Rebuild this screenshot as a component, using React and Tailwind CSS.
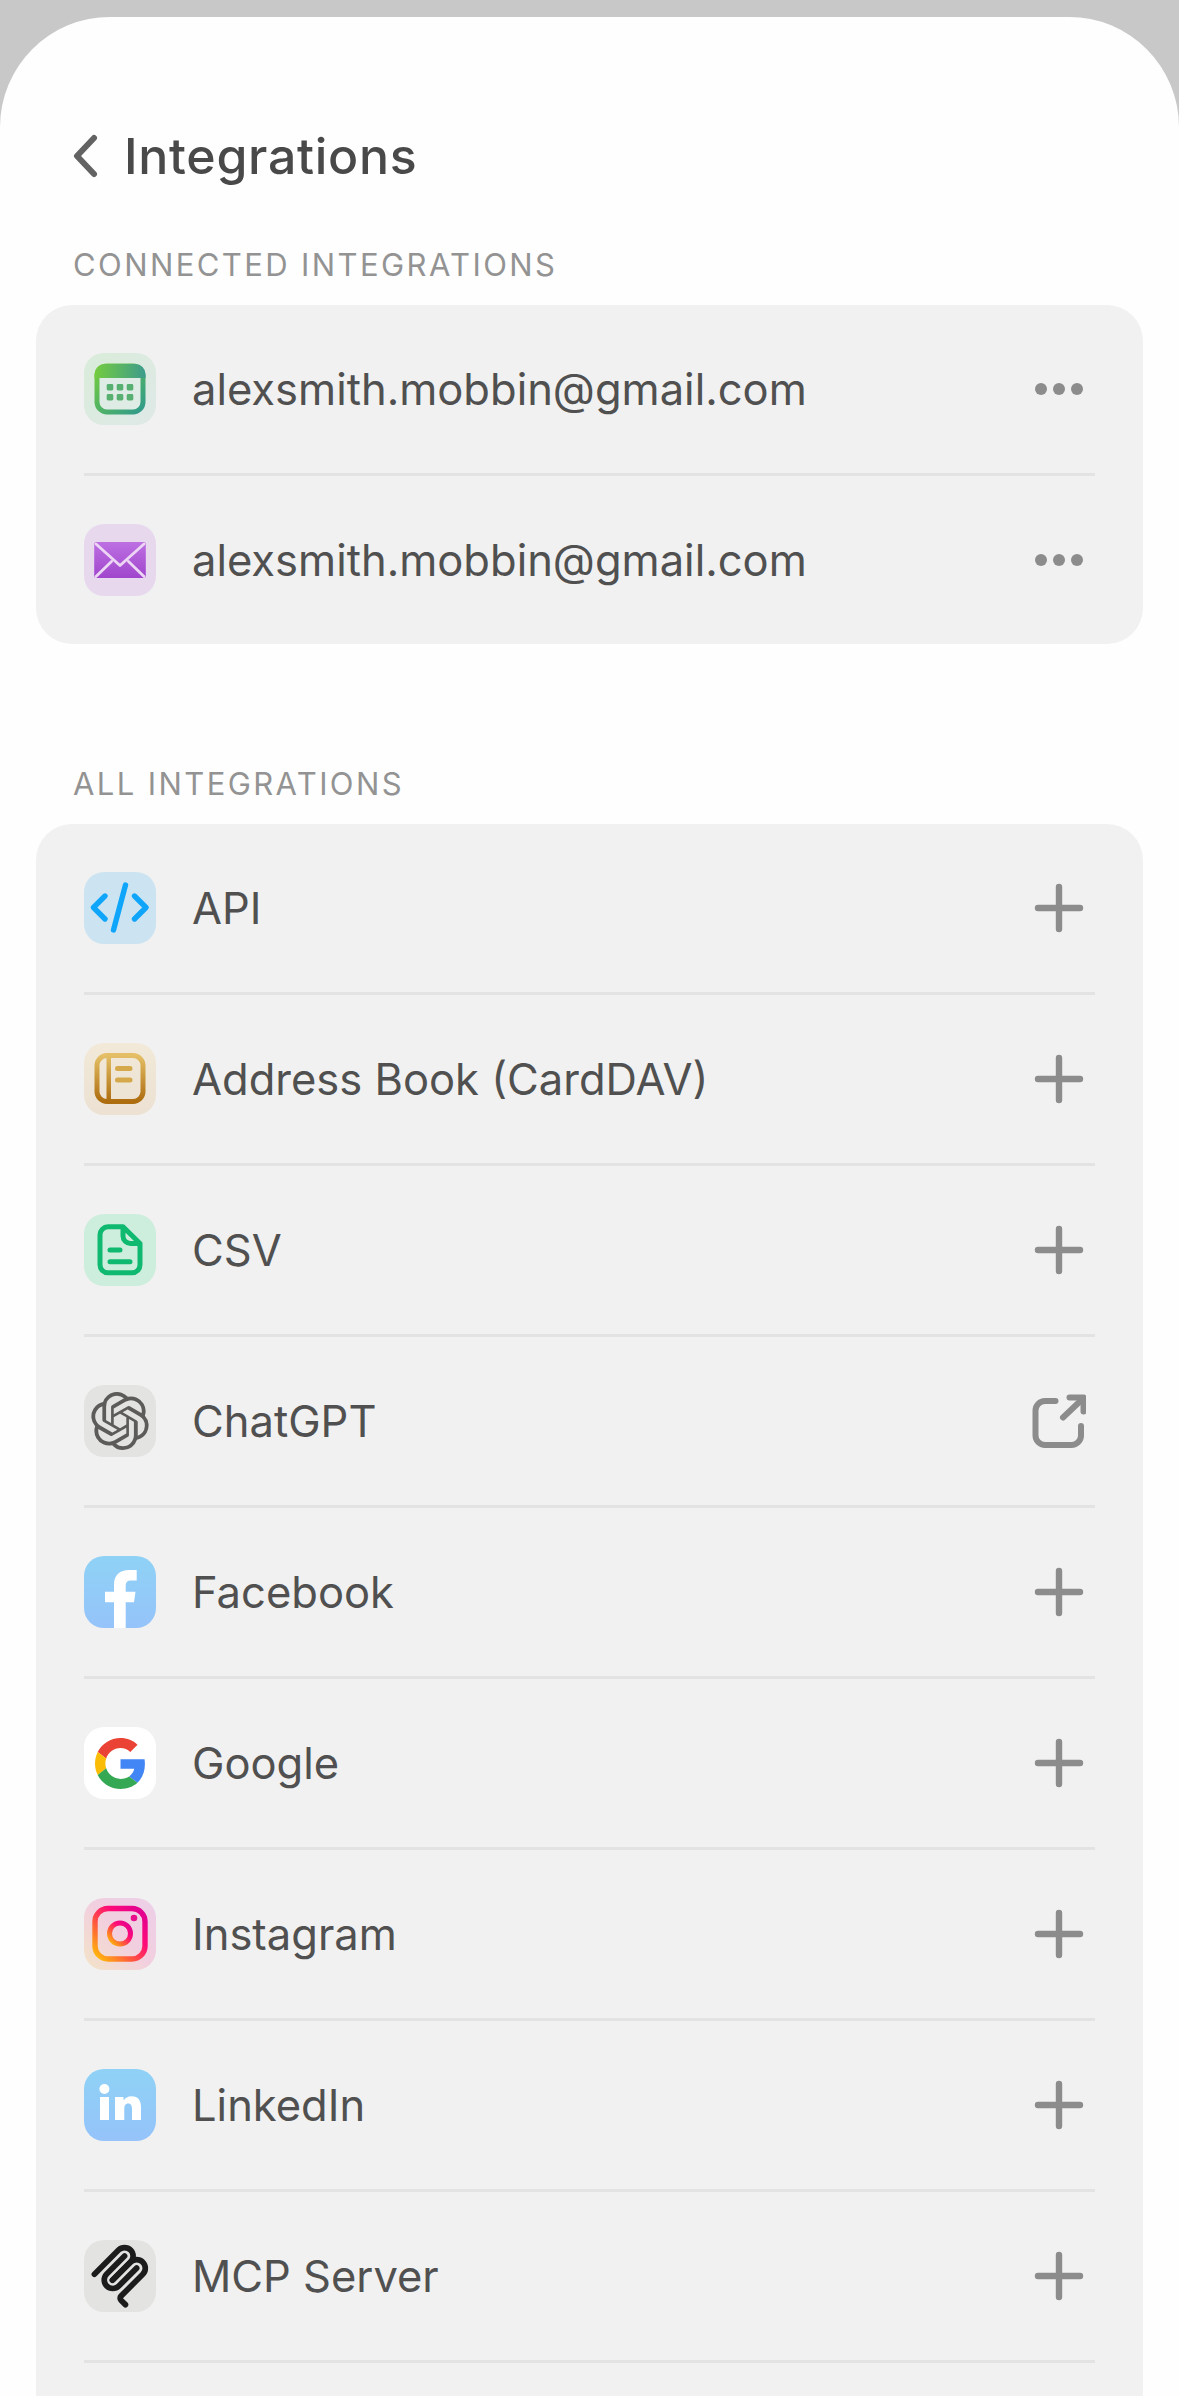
import React from "react";
import { SiOpenai } from "react-icons/si";

const Tile = ({ bg, children }) => (
  <div className={`w-[72px] h-[72px] rounded-[20px] shrink-0 overflow-hidden flex items-center justify-center ${bg}`}>
    {children}
  </div>
);

const S = ({ children }) => (
  <svg viewBox="0 0 72 72" width="72" height="72" fill="none" strokeLinecap="round" strokeLinejoin="round">
    {children}
  </svg>
);

const Grad = ({ id, x1 = 0, y1 = 0, x2 = 0, y2 = 1, stops }) => (
  <defs>
    <linearGradient id={id} x1={x1} y1={y1} x2={x2} y2={y2}>
      {stops.map(([o, c]) => (
        <stop key={o} offset={o} stopColor={c} />
      ))}
    </linearGradient>
  </defs>
);

const Calendar = () => (
  <Tile bg="bg-gradient-to-br from-[#d9ecd9] to-[#dfe9e8]">
    <S>
      <Grad id="calb" x1={0} y1={0} x2={1} y2={1} stops={[[0, "#74cc3e"], [1, "#2f9a8c"]]} />
      <Grad id="calt" x1={0} y1={0} x2={1} y2={0} stops={[[0, "#74cc3e"], [1, "#3d9c8c"]]} />
      <rect x="13" y="13" width="46" height="46" rx="10" stroke="url(#calb)" strokeWidth="5" fill="#dfece6" />
      <path d="M10.500 25V21a10 10 0 0 1 10-10h31a10 10 0 0 1 10 10v4z" fill="url(#calt)" />
      <g fill="#57b070">
        {[22.7, 32.7, 42.7].map((x) =>
          [31, 41].map((y) => <rect key={`${x}${y}`} x={x} y={y} width="6.6" height="6.4" rx="1.4" />)
        )}
      </g>
    </S>
  </Tile>
);

const Mail = () => (
  <Tile bg="bg-[#e8d8ee]">
    <S>
      <Grad id="mailb" stops={[[0, "#bd70e2"], [1, "#a045cd"]]} />
      <rect x="10.2" y="18" width="51.6" height="36" rx="2" fill="url(#mailb)" />
      <path d="M12 20l24 21.500L60 20M12 52.500l15.500-15M60 52.500l-15.500-15" stroke="#ecd6f4" strokeWidth="2.8" />
    </S>
  </Tile>
);

const Api = () => (
  <Tile bg="bg-[#cce4f1]">
    <S>
      <path d="M21 24L9.500 35.500 21 47M50.500 24L62 35.500 50.500 47M41.500 13L29.500 58" stroke="#0fa5fb" strokeWidth="5.4" />
    </S>
  </Tile>
);

const Book = () => (
  <Tile bg="bg-gradient-to-b from-[#f2e9d9] to-[#ece1d2]">
    <S>
      <Grad id="bookb" stops={[[0, "#e4bf66"], [1, "#ad6c0e"]]} />
      <rect x="13" y="12.500" width="46" height="46" rx="10" stroke="url(#bookb)" strokeWidth="5" />
      <rect x="22.500" y="12" width="4.500" height="47" fill="url(#bookb)" />
      <path d="M33.500 25.500h12.500M33.500 37h12.500" stroke="#d5a84a" strokeWidth="5" />
    </S>
  </Tile>
);

const Csv = () => (
  <Tile bg="bg-[#cdeedd]">
    <S>
      <path
        d="M39 12.800H24a8 8 0 0 0-8 8v30a8 8 0 0 0 8 8h24a8 8 0 0 0 8-8V29.500zM39 12.800V22a7.500 7.500 0 0 0 7.500 7.500H56"
        stroke="#10b970"
        strokeWidth="5"
      />
      <path d="M26 36h10M26 47.700h20" stroke="#10b970" strokeWidth="5" />
    </S>
  </Tile>
);

const Gpt = () => (
  <Tile bg="bg-[#e3e3e2]">
    <SiOpenai size={58} color="#5c5b5a" />
  </Tile>
);

const Facebook = () => (
  <Tile bg="bg-gradient-to-b from-[#8fd2f6] to-[#95c3fa]">
    <S>
      <path
        d="M30 72V46.300H21V35.800H30V28.500C30 19 36 14 45 14H52.700V24.500H47.500C43 24.500 41.700 26.500 41.700 30V35.800H51.500L50 46.300H41.700V72Z"
        fill="#fff"
      />
    </S>
  </Tile>
);

const Google = () => (
  <Tile bg="bg-white">
    <svg viewBox="0 0 48 48" width="51" height="51">
      <path fill="#EA4335" d="M24 9.5c3.54 0 6.71 1.22 9.21 3.6l6.85-6.85C35.9 2.38 30.47 0 24 0 14.62 0 6.51 5.38 2.56 13.22l7.98 6.19C12.43 13.72 17.74 9.5 24 9.5z" />
      <path fill="#4285F4" d="M46.98 24.55c0-1.57-.15-3.09-.38-4.55H24v9.02h12.94c-.58 2.96-2.26 5.48-4.78 7.18l7.73 6c4.51-4.18 7.09-10.36 7.09-17.65z" />
      <path fill="#FBBC05" d="M10.53 28.59c-.48-1.45-.76-2.99-.76-4.59s.27-3.14.76-4.59l-7.98-6.19C.92 16.46 0 20.12 0 24c0 3.88.92 7.54 2.56 10.78l7.97-6.19z" />
      <path fill="#34A853" d="M24 48c6.48 0 11.93-2.13 15.89-5.81l-7.73-6c-2.15 1.45-4.92 2.3-8.16 2.3-6.26 0-11.57-4.22-13.47-9.91l-7.98 6.19C6.51 42.62 14.62 48 24 48z" />
    </svg>
  </Tile>
);

const Instagram = () => (
  <Tile bg="bg-gradient-to-tr from-[#f3e4c6] via-[#f2cfdf] to-[#eccfe8]">
    <S>
      <Grad id="igb" x1={0} y1={1} x2={1} y2={0} stops={[[0, "#ffc107"], [0.35, "#ff5a3c"], [0.65, "#ff0a78"], [1, "#dd0094"]]} />
      <rect x="11" y="10.500" width="50" height="50.500" rx="13" stroke="url(#igb)" strokeWidth="5.4" />
      <circle cx="36" cy="35.500" r="10.500" stroke="url(#igb)" strokeWidth="5" />
      <circle cx="50" cy="20" r="3.300" fill="#e8108c" />
    </S>
  </Tile>
);

const Linkedin = () => (
  <Tile bg="bg-gradient-to-b from-[#8fd2f6] to-[#95c3fa]">
    <S>
      <circle cx="20.400" cy="20" r="5" fill="#fff" />
      <path
        d="M16 28h9v23h-9zM31 28h8.500v3.500c1.500-2.500 4.500-4.300 8-4.300 7 0 9.500 4.500 9.500 11V51h-9V40c0-3-.8-5.500-3.700-5.500-3 0-4 2.400-4 5.300V51H31z"
        fill="#fff"
      />
    </S>
  </Tile>
);

const Mcp = () => (
  <Tile bg="bg-[#e3e3e2]">
    <svg viewBox="0 0 180 180" width="64" height="64" fill="none" stroke="#1c1c1c" strokeWidth="16" strokeLinecap="round">
      <path d="M18 84.8528L85.8822 16.9706C95.2548 7.59798 110.451 7.59798 119.823 16.9706C129.196 26.3431 129.196 41.5391 119.823 50.9117L68.5581 102.177" />
      <path d="M69.2652 101.47L119.823 50.9117C129.196 41.5391 144.392 41.5391 153.765 50.9117L154.118 51.2652C163.491 60.6378 163.491 75.8338 154.118 85.2063L92.7248 146.6C89.6006 149.724 89.6006 154.789 92.7248 157.913L105.331 170.52" />
      <path d="M102.853 33.9411L52.6482 84.1457C43.2756 93.5183 43.2756 108.714 52.6482 118.087C62.0208 127.459 77.2167 127.459 86.5893 118.087L136.794 67.8822" />
    </svg>
  </Tile>
);

const Plus = () => (
  <svg viewBox="0 0 54 54" width="54" height="54" fill="none" stroke="#8c8c8c" strokeWidth="6.400" strokeLinecap="round">
    <path d="M27 6v42M6 27h42" />
  </svg>
);

const Dots = () => (
  <svg viewBox="0 0 54 54" width="54" height="54" fill="#8c8c8c">
    <circle cx="9" cy="27" r="6" />
    <circle cx="27" cy="27" r="6" />
    <circle cx="45" cy="27" r="6" />
  </svg>
);

const External = () => (
  <svg viewBox="0 0 54 54" width="54" height="54" fill="none" stroke="#8c8c8c" strokeWidth="6" strokeLinecap="round" strokeLinejoin="round">
    <path d="M23.500 7H13A9.500 9.500 0 0 0 3.500 16.500V41.500A9.500 9.500 0 0 0 13 51H39.500A9.500 9.500 0 0 0 49 41.500V32" />
    <path d="M31 23.500L51 4.500" />
    <path d="M37.500 3.500H51.500V17.500" />
  </svg>
);

const Row = ({ icon, label, action, divider }) => (
  <>
    <div className="h-[168px] flex items-center">
      {icon}
      <span className="ml-[36px] pt-[2px] flex-1 text-[43.500px] leading-none text-[#505050] font-['Inter',sans-serif] whitespace-nowrap">
        {label}
      </span>
      <div className="mr-[9px]">{action}</div>
    </div>
    {divider && <div className="h-[3px] bg-[#e3e3e3]" />}
  </>
);

const SectionLabel = ({ children, className }) => (
  <div className={`pl-[73px] text-[31px] leading-[38px] tracking-[2.400px] text-[#939393] font-['Inter',sans-serif] ${className}`}>
    {children}
  </div>
);

const connected = [
  { icon: <Calendar />, label: "alexsmith.mobbin@gmail.com" },
  { icon: <Mail />, label: "alexsmith.mobbin@gmail.com" },
];

const all = [
  { icon: <Api />, label: "API" },
  { icon: <Book />, label: "Address Book (CardDAV)" },
  { icon: <Csv />, label: "CSV" },
  { icon: <Gpt />, label: "ChatGPT", action: <External /> },
  { icon: <Facebook />, label: "Facebook" },
  { icon: <Google />, label: "Google" },
  { icon: <Instagram />, label: "Instagram" },
  { icon: <Linkedin />, label: "LinkedIn" },
  { icon: <Mcp />, label: "MCP Server" },
];

export default function App() {
  return (
    <div className="h-[2396px] overflow-hidden bg-[#c8c8c8] pt-[17px]">
      <div className="h-[2379px] rounded-t-[110px] bg-[#fefefe] overflow-hidden">
        <div className="flex items-center pl-[70px] mt-[110px] h-[58px]">
          <svg viewBox="0 0 30 48" width="30" height="48" fill="none" stroke="#636363" strokeWidth="6" strokeLinecap="round" strokeLinejoin="round">
            <path d="M24 6L7 24l17 18" />
          </svg>
          <span className="ml-[24px] text-[50px] tracking-[0.700px] leading-none font-medium text-[#494949] font-['Inter',sans-serif]">
            Integrations
          </span>
        </div>
        <SectionLabel className="mt-[61px]">CONNECTED INTEGRATIONS</SectionLabel>
        <div className="mx-[36px] mt-[21px] rounded-[36px] bg-[#f1f1f1] px-[48px]">
          {connected.map((r, i) => (
            <Row key={i} {...r} action={<Dots />} divider={i === 0} />
          ))}
        </div>
        <SectionLabel className="mt-[121px]">ALL INTEGRATIONS</SectionLabel>
        <div className="mx-[36px] mt-[21px] rounded-[36px] bg-[#f1f1f1] px-[48px] pb-[200px]">
          {all.map((r, i) => (
            <Row key={i} {...r} action={r.action || <Plus />} divider />
          ))}
        </div>
      </div>
    </div>
  );
}
